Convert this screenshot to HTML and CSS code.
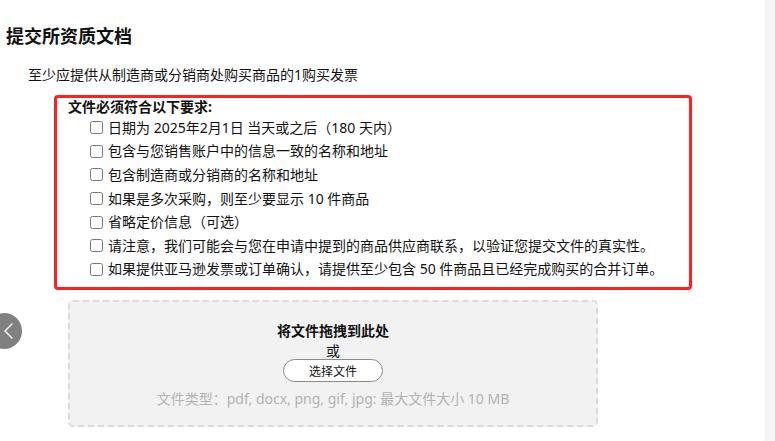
FILE: index.html
```html
<!DOCTYPE html>
<html lang="zh-CN">
<head>
<meta charset="utf-8">
<title>提交所资质文档</title>
<link rel="stylesheet" href="styles.css">
</head>
<body>
<div class="page">
  <main class="main">
    <h1 class="title">提交所资质文档</h1>
    <p class="lead">至少应提供从制造商或分销商处购买商品的1购买发票</p>
    <section class="reqs">
      <div class="reqs-head">文件必须符合以下要求:</div>
      <label class="req"><input type="checkbox" class="cb"><span>日期为 2025年2月1日 当天或之后（180 天内）</span></label>
      <label class="req"><input type="checkbox" class="cb"><span>包含与您销售账户中的信息一致的名称和地址</span></label>
      <label class="req"><input type="checkbox" class="cb"><span>包含制造商或分销商的名称和地址</span></label>
      <label class="req"><input type="checkbox" class="cb"><span>如果是多次采购，则至少要显示 10 件商品</span></label>
      <label class="req"><input type="checkbox" class="cb"><span>省略定价信息（可选）</span></label>
      <label class="req"><input type="checkbox" class="cb"><span>请注意，我们可能会与您在申请中提到的商品供应商联系，以验证您提交文件的真实性。</span></label>
      <label class="req"><input type="checkbox" class="cb"><span>如果提供亚马逊发票或订单确认，请提供至少包含 50 件商品且已经完成购买的合并订单。</span></label>
    </section>
    <section class="drop">
      <div class="drop-title">将文件拖拽到此处</div>
      <div class="drop-or">或</div>
      <button class="pick" type="button">选择文件</button>
      <div class="drop-types">文件类型：pdf, docx, png, gif, jpg: 最大文件大小 10 MB</div>
    </section>
    <button class="back" type="button" aria-label="返回">
      <svg width="14" height="20" viewBox="0 0 14 20"><path d="M10 3 L3 10 L10 17" fill="none" stroke="#fff" stroke-width="1.4" stroke-linecap="round" stroke-linejoin="round"/></svg>
    </button>
  </main>
  <aside class="track"></aside>
</div>
</body>
</html>
```

FILE: styles.css
```css
html, body {
  margin: 0;
  padding: 0;
  background: #fff;
}
body {
  font-family: "Noto Sans", "Noto Sans CJK SC", sans-serif;
  color: #111;
  font-size: 14px;
  overflow: hidden;
}
.page {
  display: flex;
  height: 441px;
}
.main {
  position: relative;
  flex: 1;
  padding-left: 6px;
  overflow: hidden;
}
.track {
  width: 10px;
  background: #f5f5f5;
}
.title {
  margin: 24px 0 0;
  font-size: 18px;
  line-height: 24px;
  font-weight: 700;
  color: #111;
}
.lead {
  margin: 17px 0 0 22px;
  font-size: 14px;
  line-height: 20px;
}
.reqs {
  margin: 10px 0 0 48px;
  width: 621px;
  border: 3px solid #ff2020;
  border-radius: 4px;
  padding: 0 0 6px 11px;
  box-sizing: content-box;
}
.reqs-head {
  font-weight: 700;
  line-height: 18px;
}
.req {
  display: flex;
  align-items: center;
  height: 23.6px;
  padding-left: 22px;
  line-height: 20px;
}
.cb {
  margin: 0 5px 0 0;
  width: 13px;
  height: 13px;
}
.drop {
  margin: 10px 0 0 62px;
  width: 530px;
  height: 127px;
  box-sizing: border-box;
  background: #f2f2f2;
  border: 2px dashed #dadada;
  border-radius: 5px;
  display: flex;
  flex-direction: column;
  align-items: center;
  padding-top: 19px;
}
.drop-title {
  font-weight: 700;
  line-height: 20px;
}
.drop-or {
  margin-top: 1px;
  line-height: 18px;
}
.pick {
  margin-top: -1px;
  width: 100px;
  height: 23px;
  border: 1px solid #8a8a8a;
  border-radius: 12px;
  background: #fff;
  font-family: inherit;
  font-size: 12px;
  color: #111;
  padding: 0;
}
.drop-types {
  margin-top: 7px;
  line-height: 20px;
  color: #b3b3b3;
}
.back {
  position: absolute;
  left: -14px;
  top: 313px;
  width: 36px;
  height: 36px;
  border-radius: 50%;
  border: none;
  background: #808080;
  padding: 0 0 0 10px;
  display: flex;
  align-items: center;
  justify-content: center;
}
```
